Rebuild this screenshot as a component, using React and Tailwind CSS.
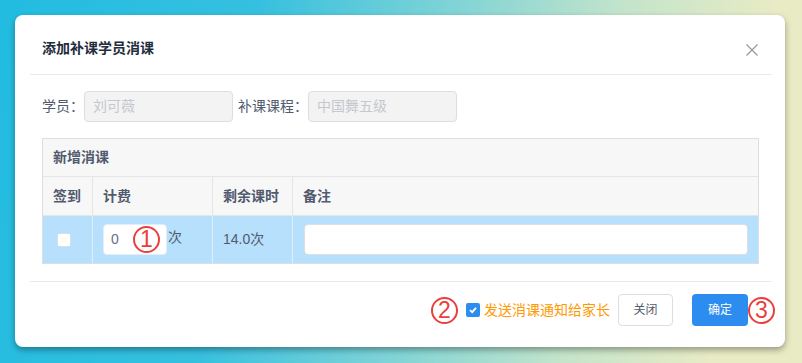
import React from "react";

const FONT = { fontFamily: '"Liberation Sans", "Noto Sans CJK SC", sans-serif' };

function Circled({ n }) {
  return (
    <span className="flex items-center justify-center w-[27px] h-[27px] rounded-full border-2 border-[#e9403e] text-[#e9403e] text-[23px] leading-none shrink-0">
      {n}
    </span>
  );
}

export default function App() {
  return (
    <div
      className="w-[802px] h-[363px] p-[15px] bg-[linear-gradient(100deg,#22bce1_0%,#36c0df_30%,#7ed3d6_52%,#c3e4cb_72%,#e9ebc4_90%)]"
      style={FONT}
    >
      <div className="w-[770px] h-[332px] bg-white rounded-[8px] shadow-[0_3px_6px_rgba(0,0,0,0.35)] flex flex-col">
        {/* header */}
        <div className="h-[59px] flex items-center justify-between pl-[27px] pr-[27px] pt-[7px]">
          <span className="text-[14px] font-bold text-[#1f2d3d] leading-[20px]">添加补课学员消课</span>
          <svg width="12" height="12" viewBox="0 0 12 12" className="mt-[4px]">
            <path d="M0.5 0.5 L11.5 11.5 M11.5 0.5 L0.5 11.5" stroke="#999" strokeWidth="1.2" fill="none" />
          </svg>
        </div>
        <div className="ml-[15px] mr-[13px] h-px bg-[#e8eaec]" />

        {/* body */}
        <div className="pl-[27px] pr-[26px] pt-[16px] pb-[17px]">
          <div className="flex items-center h-[31px] text-[14px] text-[#515a6e]">
            <span className="w-[42px]">学员：</span>
            <div className="w-[149px] h-[31px] rounded-[4px] border border-[#dcdee2] bg-[#f3f3f3] flex items-center px-[8px] text-[#c5c8ce]">
              刘可薇
            </div>
            <span className="ml-[5px] w-[70px]">补课课程：</span>
            <div className="w-[149px] h-[31px] rounded-[4px] border border-[#dcdee2] bg-[#f3f3f3] flex items-center px-[8px] text-[#c5c8ce]">
              中国舞五级
            </div>
          </div>

          <div className="mt-[16px] w-[717px] border border-[#dcdee2] text-[14px] text-[#515a6e]">
            <div className="h-[38px] bg-[#f7f7f7] border-b border-[#e6e6e6] flex items-center pl-[10px] font-bold">
              新增消课
            </div>
            <div className="h-[39px] bg-[#f7f7f7] border-b border-[#e6e6e6] grid grid-cols-[50px_120px_80px_1fr] font-bold">
              <div className="border-r border-[#e6e6e6] flex items-center pl-[10px]">签到</div>
              <div className="border-r border-[#e6e6e6] flex items-center pl-[10px]">计费</div>
              <div className="border-r border-[#e6e6e6] flex items-center pl-[10px]">剩余课时</div>
              <div className="flex items-center pl-[10px]">备注</div>
            </div>
            <div className="h-[47px] bg-[#b6e0fb] grid grid-cols-[50px_120px_80px_1fr]">
              <div className="border-r border-[#e3eef6] flex items-center pl-[14px]">
                <span className="w-[14px] h-[14px] bg-white border border-[#dcdee2] rounded-[2px]" />
              </div>
              <div className="border-r border-[#e3eef6] flex items-center pl-[10px]">
                <div className="relative w-[64px] h-[31px] bg-white rounded-[4px] border border-[#e3eef6] flex items-center pl-[7px] text-[#657180]">
                  0
                  <span className="absolute left-[29px] top-[1px]">
                    <Circled n="1" />
                  </span>
                </div>
                <span className="ml-[1px] -mt-[4px]">次</span>
              </div>
              <div className="border-r border-[#e3eef6] flex items-center pl-[10px]">14.0次</div>
              <div className="flex items-center pl-[11px] pr-[10px]">
                <div className="w-full h-[31px] bg-white rounded-[4px] border border-[#dcdee2]" />
              </div>
            </div>
          </div>
        </div>

        <div className="ml-[15px] mr-[13px] h-px bg-[#e8eaec]" />

        {/* footer */}
        <div className="flex items-center justify-end pt-[12px] pr-[10px]">
          <Circled n="2" />
          <span className="ml-[8px] w-[14px] h-[14px] rounded-[2px] bg-[#2d8cf0] flex items-center justify-center">
            <svg width="10" height="10" viewBox="0 0 10 10">
              <path d="M2 5.2 L4.2 7.2 L8 2.8" stroke="white" strokeWidth="1.8" fill="none" />
            </svg>
          </span>
          <span className="ml-[4px] text-[14px] text-[#ff9900]">发送消课通知给家长</span>
          <button className="ml-[8px] w-[55px] h-[32px] rounded-[4px] border border-[#dcdee2] bg-white text-[12px] text-[#515a6e]">
            关闭
          </button>
          <button className="ml-[19px] w-[56px] h-[32px] rounded-[4px] bg-[#2d8cf0] text-[12px] text-white">
            确定
          </button>
          <Circled n="3" />
        </div>
      </div>
    </div>
  );
}
